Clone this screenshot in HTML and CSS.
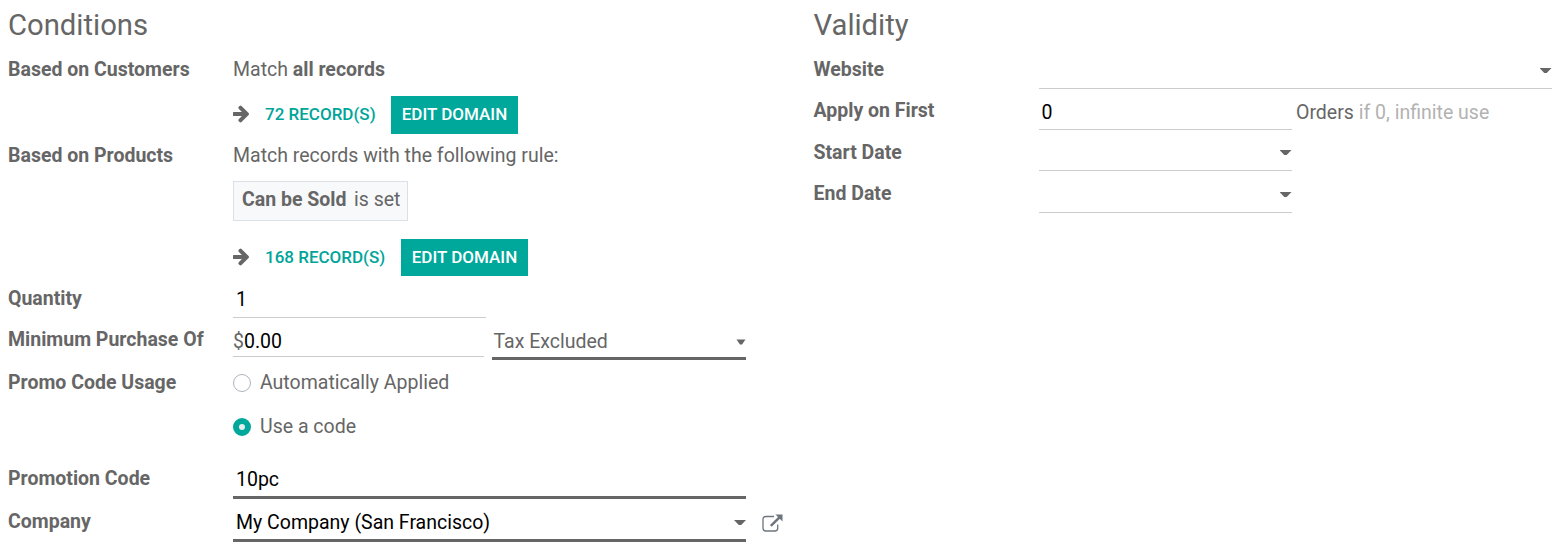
FILE: index.html
```
<!DOCTYPE html>
<html lang="en">
<head>
<meta charset="utf-8">
<title>Promotion Program</title>
<link rel="stylesheet" href="styles.css">
</head>
<body>
<main class="form">
  <section class="group">
    <h2 class="title">Conditions</h2>
    <div class="row row-customers">
      <span class="label">Based on Customers</span>
      <div class="value">
        <div class="match">Match <b>all records</b></div>
        <div class="actions actions-customers">
          <svg class="arrow" viewBox="0 132 1472 1656"><path d="M1472 960q0 54-37 91l-651 651q-39 37-91 37-51 0-90-37l-75-75q-38-38-38-91t38-91l293-293H60Q0 1152 0 1090V830q0-62 60-62h761L528 474q-38-36-38-90t38-90l75-75q38-38 90-38 53 0 91 38l651 651q37 35 37 90z" fill="currentColor"/></svg>
          <a class="records records-customers">72 RECORD(S)</a>
          <button class="btn btn-tall">EDIT DOMAIN</button>
        </div>
      </div>
    </div>
    <div class="row row-products">
      <span class="label">Based on Products</span>
      <div class="value">
        <div class="match">Match records with the following rule:</div>
        <div class="rule"><b>Can be Sold</b><span>is set</span></div>
        <div class="actions actions-products">
          <svg class="arrow" viewBox="0 132 1472 1656"><path d="M1472 960q0 54-37 91l-651 651q-39 37-91 37-51 0-90-37l-75-75q-38-38-38-91t38-91l293-293H60Q0 1152 0 1090V830q0-62 60-62h761L528 474q-38-36-38-90t38-90l75-75q38-38 90-38 53 0 91 38l651 651q37 35 37 90z" fill="currentColor"/></svg>
          <a class="records records-products">168 RECORD(S)</a>
          <button class="btn">EDIT DOMAIN</button>
        </div>
      </div>
    </div>
    <div class="row row-quantity">
      <span class="label">Quantity</span>
      <div class="field half">1</div>
    </div>
    <div class="row row-minimum">
      <span class="label">Minimum Purchase Of</span>
      <div class="amount"><span class="currency">$</span>0.00</div>
      <div class="tax"><span>Tax Excluded</span><svg class="tax-caret" viewBox="0 0 10 6"><path d="M.5.4h9L6 5.400H4z" fill="currentColor"/></svg></div>
    </div>
    <div class="row row-usage">
      <span class="label">Promo Code Usage</span>
      <div class="options">
        <div class="option"><i class="radio"></i><span>Automatically Applied</span></div>
        <div class="option"><i class="radio checked"></i><span>Use a code</span></div>
      </div>
    </div>
    <div class="row row-code">
      <span class="label">Promotion Code</span>
      <div class="field full required">10pc</div>
    </div>
    <div class="row row-company">
      <span class="label">Company</span>
      <div class="field full required"><span>My Company (San Francisco)</span><i class="caret"></i></div>
      <svg class="external" viewBox="0 0 21 18"><path d="M12 2.500H3.800Q1 2.500 1 5.300v8.900Q1 17 3.800 17h9.100q2.800 0 2.800-2.800V10.500" fill="none" stroke="currentColor" stroke-width="1.300"/><path d="M8.800 11.800 17.500 3.400" stroke="currentColor" stroke-width="2.500"/><path d="M13.400.6h7.100v6.900z" fill="currentColor"/></svg>
    </div>
  </section>
  <section class="group">
    <h2 class="title">Validity</h2>
    <div class="row row-website">
      <span class="label">Website</span>
      <div class="field full"><i class="caret"></i></div>
    </div>
    <div class="row row-apply">
      <span class="label">Apply on First</span>
      <div class="field half">0</div>
      <div class="orders">Orders <span class="hint">if 0, infinite use</span></div>
    </div>
    <div class="row row-start">
      <span class="label">Start Date</span>
      <div class="field half"><i class="caret"></i></div>
    </div>
    <div class="row row-end">
      <span class="label">End Date</span>
      <div class="field half"><i class="caret"></i></div>
    </div>
  </section>
</main>
</body>
</html>
```
FILE: styles.css
```
* { box-sizing: border-box; }
body {
  margin: 0;
  background: #fff;
  color: #666;
  font: 19.5px/29px Roboto, sans-serif;
}
.form {
  display: grid;
  grid-template-columns: 805.5px 1fr;
  height: 554px;
  padding-left: 8px;
}
.title {
  height: 54px;
  margin: 0;
  padding-top: 7px;
  font-size: 29.25px;
  font-weight: 400;
  line-height: 36px;
}
.row {
  display: flex;
  align-items: flex-start;
}
.label {
  flex: 0 0 225px;
  padding-top: 1px;
  font-weight: 700;
  white-space: nowrap;
}
b { font-weight: 700; }
.row-customers { height: 86px; }
.row-products { height: 143px; }
.row-quantity { height: 41px; }
.row-minimum { height: 43px; }
.row-usage { height: 96px; }
.row-code { height: 43px; }
.row-website { height: 41px; }
.row-apply { height: 42px; }
.row-start { height: 41px; }

.match { padding-top: 1px; }
.actions {
  display: flex;
  align-items: flex-start;
}
.actions-customers { margin-top: 12px; }
.actions-products { margin-top: 18px; }
.arrow {
  width: 16px;
  height: 18px;
  margin-top: 9px;
  margin-right: 16px;
}
.records, .btn {
  font-size: 17px;
  font-weight: 500;
  line-height: 29px;
  white-space: nowrap;
}
.records {
  padding-top: 4px;
  color: #00a599;
}
.records-customers { width: 126px; }
.records-products { width: 136px; }
.btn {
  width: 127px;
  height: 37px;
  padding: 0 0 1px;
  border: 0;
  background: #00a79b;
  color: #fff;
  font-family: inherit;
}
.btn-tall {
  height: 38px;
  padding-bottom: 2px;
}
.rule {
  display: flex;
  gap: 7.5px;
  width: 175px;
  height: 40px;
  margin-top: 11px;
  padding: 3px 8px;
  border: 1px solid #dae0e5;
  background: #f8f9fb;
  white-space: nowrap;
}

.field {
  display: flex;
  justify-content: space-between;
  height: 35px;
  padding: 2px 0 0 3px;
  border-bottom: 1px solid #ccc;
  color: #000;
}
.half { width: 253px; }
.full { width: 513px; }
.required {
  height: 36px;
  border-bottom: 3px solid #666;
}
.row-apply .field { padding-top: 3px; }
.row-start .field {
  height: 34px;
  padding-top: 1px;
}
.caret {
  width: 12px;
  height: 5px;
  margin-left: auto;
  margin-top: 12px;
  background: #666;
  clip-path: polygon(0 0, 100% 0, 60% 100%, 40% 100%);
}
.amount {
  width: 251px;
  height: 33px;
  margin-right: 8px;
  padding-top: 3px;
  border-bottom: 1px solid #ccc;
  color: #000;
}
.currency { color: #666; }
.tax {
  display: flex;
  justify-content: space-between;
  width: 254px;
  height: 36px;
  padding: 3px 0 0 1.5px;
  border-bottom: 3px solid #666;
}
.tax-caret {
  width: 10px;
  height: 6px;
  margin-top: 11.5px;
}
.option {
  display: flex;
  align-items: flex-start;
  gap: 9px;
  height: 44px;
  padding-top: 1px;
}
.radio {
  width: 18px;
  height: 18px;
  margin-top: 6px;
  border: 1px solid #adb5bd;
  border-radius: 50%;
}
.radio.checked {
  border: 6px solid #00a79b;
  background: #e9ecef;
}
.external {
  width: 21px;
  height: 18px;
  margin: 8px 0 0 16px;
  color: #6c757d;
}
.orders {
  padding: 3px 0 0 4.5px;
  white-space: nowrap;
}
.hint { color: #b2b2b2; }
```
